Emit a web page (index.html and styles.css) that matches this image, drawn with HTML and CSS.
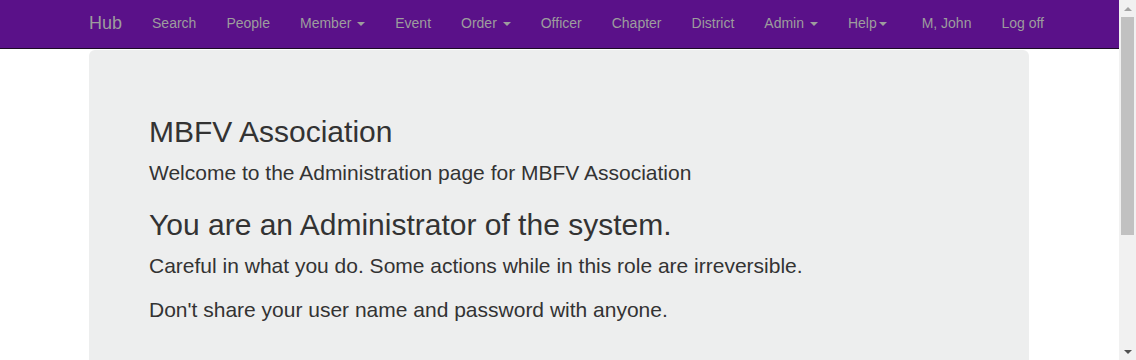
FILE: index.html
```html
<!DOCTYPE html>
<html lang="en">
<head>
  <meta charset="utf-8">
  <title>Administration - Hub</title>
  <link rel="stylesheet" href="styles.css">
</head>
<body>

  <div class="navbar">
    <div class="container nav-inner">
      <a class="navbar-brand" href="#">Hub</a>
      <ul class="nav">
        <li><a href="#">Search</a></li>
        <li><a href="#">People</a></li>
        <li><a href="#">Member <span class="caret"></span></a></li>
        <li><a href="#">Event</a></li>
        <li><a href="#">Order <span class="caret"></span></a></li>
        <li><a href="#">Officer</a></li>
        <li><a href="#">Chapter</a></li>
        <li><a href="#">District</a></li>
        <li><a href="#">Admin <span class="caret"></span></a></li>
        <li><a href="#">Help<span class="caret"></span></a></li>
      </ul>
      <ul class="nav nav-right">
        <li><a href="#">M, John</a></li>
        <li><a href="#">Log off</a></li>
      </ul>
    </div>
  </div>

  <div class="container body-content">
    <div class="jumbotron">
      <h2>MBFV Association</h2>
      <p>Welcome to the Administration page for MBFV Association</p>
      <h2>You are an Administrator of the system.</h2>
      <p>Careful in what you do. Some actions while in this role are irreversible.</p>
      <p>Don't share your user name and password with anyone.</p>
    </div>
  </div>

  <!-- page scrollbar, as seen in the screenshot -->
  <div class="scrollbar">
    <div class="scroll-btn scroll-up"></div>
    <div class="scroll-track">
      <div class="scroll-thumb"></div>
    </div>
    <div class="scroll-btn scroll-down"></div>
  </div>

</body>
</html>
```

FILE: styles.css
```css
* {
  box-sizing: border-box;
}

html {
  overflow: hidden;
}

body {
  margin: 0;
  padding-top: 50px;
  padding-right: 18px;
  font-family: "Liberation Sans", Arial, sans-serif;
  font-size: 14px;
  line-height: 1.42857;
  color: #333;
  background-color: #fff;
}

.container {
  width: 970px;
  margin: 0 auto;
  padding: 0 15px;
}

.navbar {
  position: fixed;
  top: 0;
  left: 0;
  right: 17px;
  height: 49px;
  padding-right: 1px;
  background-color: #5a1189;
  border-bottom: 1px solid #1c0b26;
}

.nav-inner {
  display: flex;
}

.navbar-brand {
  margin-left: -15px;
  padding: 13px 15px 15px;
  font-size: 18px;
  line-height: 20px;
  color: #9d9d9d;
  text-decoration: none;
}

.nav {
  display: flex;
  margin: 0;
  padding: 0;
  list-style: none;
}

.nav-right {
  margin-left: auto;
  margin-right: -30px;
}

.nav a {
  display: block;
  padding: 13px 15px 15px;
  line-height: 20px;
  color: #9d9d9d;
  text-decoration: none;
}

.caret {
  display: inline-block;
  width: 0;
  height: 0;
  margin-left: 2px;
  vertical-align: middle;
  border-top: 4px solid;
  border-right: 4px solid transparent;
  border-left: 4px solid transparent;
}

.body-content {
  min-height: 490px;
}

.jumbotron {
  padding: 45px 60px 48px;
  margin-bottom: 30px;
  background-color: #edeeee;
  border-radius: 6px;
}

.jumbotron h2 {
  margin: 20px 0 10px;
  font-size: 30px;
  font-weight: 500;
  line-height: 1.1;
}

.jumbotron p {
  margin: 0 0 14px;
  font-size: 21px;
  font-weight: 200;
}

.jumbotron p:last-child {
  margin-bottom: 0;
}

.scrollbar {
  position: fixed;
  top: 0;
  right: 0;
  bottom: 0;
  width: 17px;
  display: flex;
  flex-direction: column;
  background-color: #f1f1f1;
}

.scroll-btn {
  height: 17px;
  display: flex;
  justify-content: center;
  align-items: center;
}

.scroll-up::before,
.scroll-down::before {
  content: "";
  width: 0;
  height: 0;
  border-left: 4px solid transparent;
  border-right: 4px solid transparent;
}

.scroll-up::before {
  border-bottom: 4px solid #a3a3a3;
}

.scroll-down::before {
  border-top: 4px solid #505050;
}

.scroll-track {
  flex: 1;
  padding: 0 2px;
}

.scroll-thumb {
  height: 218px;
  background-color: #c1c1c1;
}
```
